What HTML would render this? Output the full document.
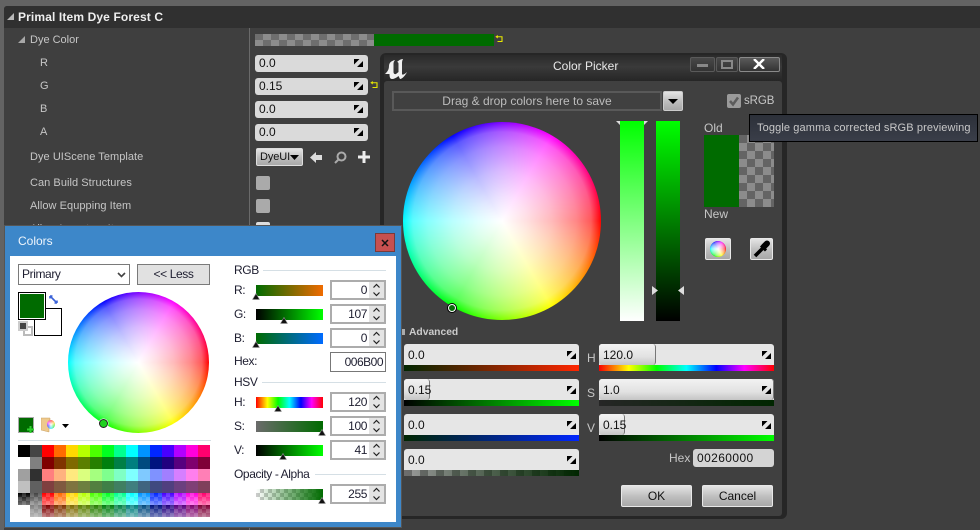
<!DOCTYPE html>
<html><head><meta charset="utf-8"><style>
html,body{margin:0;padding:0}
body{width:980px;height:530px;overflow:hidden;position:relative;background:#636363;font-family:"Liberation Sans",sans-serif;font-size:12px}
div,svg,span.a{position:absolute;box-sizing:border-box}
.t{position:absolute;white-space:nowrap;line-height:14px;height:14px}
.l{color:#c6c6c6}
.s{left:255px;width:113px;height:17px;background:#dadada;border-radius:3px;color:#111}
.v{position:absolute;left:4px;top:1px;line-height:14px;white-space:nowrap;color:#111}
.sp .v{top:4px}
.cb{left:256px;width:14px;height:14px;background:#aaa;border-radius:2px}
.sp{width:175px;height:21px;background:#e6e6e6;border-radius:3px 3px 0 0;color:#111}
.h{left:0;top:0;height:21px;background:linear-gradient(#f2f2f2,#e2e2e2 60%,#c4c4c4);border-right:1px solid #777;border-radius:3px}
.st{width:175px;height:6px}
.d{color:#1e1e30;letter-spacing:-.4px}
.sl{left:256px;width:67px;height:11px}
.n{left:330px;width:56px;height:20px;background:#fff;border:2px solid #acacac}
.nv{position:absolute;right:17px;top:1px;line-height:15px;font-size:12px;color:#1e1e30;letter-spacing:-.4px}
.ar{position:absolute;right:0;width:15px;height:8px;background:#e4e4e4}
.m{width:8px;height:7px}
.btn{background:linear-gradient(#e4e4e4,#bdbdbd 55%,#a8a8a8);border:1px solid #e8e8e8;border-radius:2px;color:#111;text-align:center;line-height:20px}
.sw{left:18px;width:192px;height:12px}
.wh{background:radial-gradient(closest-side,#fff 0,rgba(255,255,255,.88) 25%,rgba(255,255,255,.73) 50%,rgba(255,255,255,.53) 75%,rgba(255,255,255,.35) 90%,rgba(255,255,255,0) 100%),conic-gradient(from 90deg,#f00,#ff0,#0f0,#0ff,#00f,#f0f,#f00);border-radius:50%}
</style></head><body>
<svg width="0" height="0" style="left:0;top:0"><defs>
<symbol id="rz" viewBox="0 0 9 8"><path d="M0 0H5.500L0 5.500ZM9 2V8H3Z" fill="#000"/></symbol>
<symbol id="tri" viewBox="0 0 8 7"><path d="M4 0.500L7.500 6.500H.5Z" fill="#111" stroke="#999" stroke-width=".6"/></symbol>
<symbol id="up" viewBox="0 0 15 8"><path d="M4.500 5.500L7.500 2.500L10.500 5.500" fill="none" stroke="#222" stroke-width="1.200"/></symbol>
<symbol id="dn" viewBox="0 0 15 8"><path d="M4.500 2.500L7.500 5.500L10.500 2.500" fill="none" stroke="#222" stroke-width="1.200"/></symbol>
<symbol id="rs" viewBox="0 0 8 8"><path d="M2 1.750H7V6.500H2.500" fill="none" stroke="#e8e800" stroke-width="1.100"/><path d="M2.800 0V3.500L.3 1.750Z" fill="#e8e800"/></symbol>
</defs></svg>

<!-- details panel -->
<div style="left:4px;top:6px;width:976px;height:524px;background:#3f3f3f;border-radius:3px 0 0 0"></div>
<div style="left:4px;top:6px;width:976px;height:22px;background:#303030;border-radius:3px 0 0 0"></div>
<svg style="left:7px;top:13px" width="7" height="7"><path d="M7 0V7H0Z" fill="#b8b8b8"/></svg>
<span class="t" style="left:18px;top:10px;color:#eee;font-weight:bold;font-size:12px;letter-spacing:.13px">Primal Item Dye Forest C</span>
<div style="left:249px;top:28px;width:1px;height:502px;background:#6a6a6a"></div>
<svg style="left:18px;top:36px" width="7" height="7"><path d="M7 0V7H0Z" fill="#a8a8a8"/></svg>
<span class="t l" style="left:30px;top:33px;font-size:11px">Dye Color</span>
<span class="t l" style="left:40px;top:56px;font-size:11px">R</span>
<span class="t l" style="left:40px;top:79px;font-size:11px">G</span>
<span class="t l" style="left:40px;top:102px;font-size:11px">B</span>
<span class="t l" style="left:40px;top:125px;font-size:11px">A</span>
<span class="t l" style="left:30px;top:150px;font-size:11px;letter-spacing:.05px">Dye UIScene Template</span>
<span class="t l" style="left:30px;top:176px;font-size:11px;letter-spacing:.05px">Can Build Structures</span>
<span class="t l" style="left:30px;top:199px;font-size:11px;letter-spacing:.05px">Allow Equpping Item</span>
<span class="t l" style="left:30px;top:222px;font-size:11px">Allow Inventory Item</span>

<div style="left:255px;top:34px;width:119px;height:12px;background:repeating-conic-gradient(#8c8c8c 0 25%,#6e6e6e 0 50%) 0 0/16px 12px"></div>
<div style="left:374px;top:34px;width:120px;height:12px;background:#006b00"></div>
<svg style="left:495px;top:35px" width="8" height="8"><use href="#rs"/></svg>

<div class="s" style="top:55px"><span class="v">0.0</span><svg style="left:99px;top:4px" width="9" height="8"><use href="#rz"/></svg></div>
<div class="s" style="top:78px"><span class="v">0.15</span><svg style="left:99px;top:4px" width="9" height="8"><use href="#rz"/></svg></div>
<div class="s" style="top:101px"><span class="v">0.0</span><svg style="left:99px;top:4px" width="9" height="8"><use href="#rz"/></svg></div>
<div class="s" style="top:124px"><span class="v">0.0</span><svg style="left:99px;top:4px" width="9" height="8"><use href="#rz"/></svg></div>
<svg style="left:370px;top:81px" width="8" height="8"><use href="#rs"/></svg>

<div class="btn" style="left:256px;top:148px;width:47px;height:18px;line-height:16px;text-align:left;padding-left:3px;border-color:#ddd;font-size:11px;letter-spacing:-.1px">DyeUI</div>
<svg style="left:290px;top:155px" width="9" height="5"><path d="M0 0H9L4.500 5Z" fill="#000"/></svg>
<svg style="left:310px;top:151px" width="13" height="13"><path d="M0 6.500L6 1V4H12V9H6V12Z" fill="#ddd"/></svg>
<svg style="left:334px;top:151px" width="13" height="13"><circle cx="7.500" cy="5.500" r="4" fill="none" stroke="#aaa" stroke-width="2"/><path d="M4.500 8.500L1 12" stroke="#aaa" stroke-width="2"/></svg>
<svg style="left:358px;top:151px" width="12" height="12"><path d="M4.500 0H7.500V4.500H12V7.500H7.500V12H4.500V7.500H0V4.500H4.500Z" fill="#eee"/></svg>
<div class="cb" style="top:176px"></div>
<div class="cb" style="top:199px"></div>
<div class="cb" style="top:222px;background:#ddd"></div>

<!-- Color picker window -->
<div style="left:380px;top:53px;width:407px;height:466px;background:#262626;border-radius:6px"></div>
<div style="left:384px;top:55px;width:398px;height:26px;background:linear-gradient(#2a2a2a,#3a3a3a 45%,#262626)"></div>
<div style="left:384px;top:81px;width:398px;height:435px;background:#404040;border-radius:3px"></div>
<svg style="left:385px;top:59px" width="23" height="20"><path d="M0 15C2 13 4 11 4 7C4 4 6 2 10 1C8.500 3 8.500 4 8.500 6V13C8.500 15 10 15.500 11 15L13.500 13V5C13.500 3.500 13 3 12 3C14 1 16 0 18 0C17 2 17 3 17 5V15C17 16 19 16 22 13C20 17 17 20 15 20L13.500 17C11 19 9 20 7 20C5 20 4.500 18 4.500 15C3 15 1.500 15 0 15Z" fill="#f0f0f0"/></svg>
<span class="t" style="left:553px;top:59px;color:#e8e8e8;font-size:12px">Color Picker</span>
<div style="left:690px;top:57px;width:25px;height:15px;background:linear-gradient(#484848,#333);border:1px solid #5a5a5a;border-radius:2px"><div style="left:6px;top:6px;width:11px;height:3px;background:#888"></div></div>
<div style="left:716px;top:57px;width:22px;height:15px;background:linear-gradient(#484848,#333);border:1px solid #5a5a5a;border-radius:2px"><div style="left:4px;top:2px;width:12px;height:9px;border:2px solid #888"></div></div>
<div style="left:739px;top:57px;width:41px;height:15px;background:linear-gradient(#5a5a5a,#333);border:1px solid #8a8a8a;border-radius:2px"></div>
<svg style="left:753px;top:59px" width="12" height="10"><path d="M1 0L11 10M11 0L1 10" stroke="#fff" stroke-width="2.400"/></svg>

<div style="left:392px;top:91px;width:270px;height:20px;border:2px solid #595959"></div>
<span class="t" style="left:392px;top:94px;width:270px;text-align:center;color:#bcbcbc">Drag &amp; drop colors here to save</span>
<div class="btn" style="left:663px;top:91px;width:20px;height:20px;border-color:#ccc"></div>
<svg style="left:668px;top:99px" width="10" height="5"><path d="M0 0H10L5 5Z" fill="#000"/></svg>
<div class="cb" style="left:727px;top:94px;background:#9a9a9a"></div>
<svg style="left:728px;top:95px" width="12" height="12"><path d="M2 6L5 9.500L10 2.500" fill="none" stroke="#5c5c5c" stroke-width="2.500"/></svg>
<span class="t" style="left:744px;top:94px;color:#c6c6c6;font-size:11.500px;letter-spacing:-.1px">sRGB</span>

<!-- big wheel -->
<div class="wh" style="left:403px;top:122px;width:198px;height:198px"></div>
<div style="left:448px;top:304px;width:8px;height:8px;border-radius:50%;background:#0a6b0a;border:1px solid #fff;box-shadow:0 0 0 1px #000"></div>

<div style="left:620px;top:121px;width:24px;height:200px;background:linear-gradient(#0f0,#fff)"></div>
<div style="left:656px;top:121px;width:24px;height:200px;background:linear-gradient(#0f0,#000)"></div>
<svg style="left:616px;top:120px" width="32" height="5"><path d="M0 1H4V5ZM32 1H28V5Z" fill="#ddd"/></svg>
<svg style="left:652px;top:286px" width="32" height="9"><path d="M0 0L6 4.500L0 9ZM32 0L26 4.500L32 9Z" fill="#ddd"/></svg>

<span class="t" style="left:704px;top:121px;color:#c6c6c6">Old</span>
<div style="left:704px;top:135px;width:35px;height:72px;background:#006b00"></div>
<div style="left:739px;top:135px;width:35px;height:72px;background:repeating-conic-gradient(#8c8c8c 0 25%,#646464 0 50%) 0 0/16px 16px"></div>
<span class="t" style="left:704px;top:207px;color:#c6c6c6">New</span>
<div class="btn" style="left:705px;top:238px;width:26px;height:22px"></div>
<div class="wh" style="left:710px;top:241px;width:16px;height:16px"></div>
<div class="btn" style="left:750px;top:238px;width:23px;height:22px"></div>
<svg style="left:752px;top:239px" width="20" height="20"><path d="M3 17L10.500 9.500" stroke="#000" stroke-width="3.600" fill="none"/><path d="M9 6.500L14 11.500" stroke="#000" stroke-width="3" fill="none"/><path d="M12 7.500L15 4.500" stroke="#000" stroke-width="6" stroke-linecap="round" fill="none"/></svg>

<!-- tooltip -->
<div style="left:749px;top:114px;width:229px;height:28px;background:linear-gradient(#2c3039,#3a3e49);border:1px solid #000"></div>
<span class="t" style="left:757px;top:121px;color:#c8c8c8;font-size:11px;letter-spacing:.12px">Toggle gamma corrected sRGB previewing</span>

<!-- advanced -->
<svg style="left:402px;top:329px" width="3" height="6"><rect width="3" height="6" fill="#aaa"/></svg>
<span class="t" style="left:409px;top:326px;color:#ccc;font-weight:bold;font-size:10.300px">Advanced</span>

<div class="sp" style="left:404px;top:344px"><span class="v">0.0</span><svg style="left:163px;top:7px" width="9" height="8"><use href="#rz"/></svg></div>
<div class="st" style="left:404px;top:365px;background:linear-gradient(90deg,#002600,#ff2600)"></div>
<div class="sp" style="left:404px;top:379px"><div class="h" style="width:26px"></div><span class="v">0.15</span><svg style="left:163px;top:7px" width="9" height="8"><use href="#rz"/></svg></div>
<div class="st" style="left:404px;top:400px;background:linear-gradient(90deg,#000,#0f0)"></div>
<div class="sp" style="left:404px;top:414px"><span class="v">0.0</span><svg style="left:163px;top:7px" width="9" height="8"><use href="#rz"/></svg></div>
<div class="st" style="left:404px;top:435px;background:linear-gradient(90deg,#002600,#0026ff)"></div>
<div class="sp" style="left:404px;top:449px"><span class="v">0.0</span><svg style="left:163px;top:7px" width="9" height="8"><use href="#rz"/></svg></div>
<div class="st" style="left:404px;top:470px;background:linear-gradient(90deg,rgba(0,38,0,0),#002600),repeating-conic-gradient(#9a9a9a 0 25%,#6e6e6e 0 50%) 0 0/16px 12px"></div>

<span class="t l" style="left:587px;top:351px">H</span>
<span class="t l" style="left:587px;top:386px">S</span>
<span class="t l" style="left:587px;top:421px">V</span>

<div class="sp" style="left:599px;top:344px"><div class="h" style="width:57px"></div><span class="v">120.0</span><svg style="left:163px;top:7px" width="9" height="8"><use href="#rz"/></svg></div>
<div class="st" style="left:599px;top:365px;background:linear-gradient(90deg,#f80000,#ff0 17%,#0f0 33%,#0ff 50%,#00f 67%,#f0f 83%,#f00)"></div>
<div class="sp" style="left:599px;top:379px"><div class="h" style="width:175px"></div><span class="v">1.0</span><svg style="left:163px;top:7px" width="9" height="8"><use href="#rz"/></svg></div>
<div class="st" style="left:599px;top:400px;background:linear-gradient(90deg,#262626,#002600)"></div>
<div class="sp" style="left:599px;top:414px"><div class="h" style="width:26px"></div><span class="v">0.15</span><svg style="left:163px;top:7px" width="9" height="8"><use href="#rz"/></svg></div>
<div class="st" style="left:599px;top:435px;background:linear-gradient(90deg,#000,#0f0)"></div>

<span class="t l" style="left:669px;top:451px">Hex</span>
<div style="left:693px;top:449px;width:81px;height:18px;background:#d4d4d4;border-radius:3px"></div>
<span class="t" style="left:697px;top:451px;color:#111;letter-spacing:.4px">00260000</span>
<div class="btn" style="left:621px;top:485px;width:71px;height:22px">OK</div>
<div class="btn" style="left:702px;top:485px;width:71px;height:22px">Cancel</div>

<!-- Colors window -->
<div style="left:4px;top:225px;width:398px;height:303px;background:#3d87c9;border:1px solid #555"></div>
<div style="left:10px;top:256px;width:386px;height:266px;background:#fff"></div>
<span class="t" style="left:18px;top:234px;color:#eef5fc;font-size:12px">Colors</span>
<div style="left:375px;top:233px;width:20px;height:19px;background:#c75050;border:1px solid #7a3a3a"></div>
<svg style="left:381px;top:239px" width="8" height="8"><path d="M1 1L7 7M7 1L1 7" stroke="#111" stroke-width="1.500"/></svg>

<div style="left:18px;top:264px;width:112px;height:21px;border:1px solid #7a7a7a;background:#fff"></div>
<span class="t d" style="left:22px;top:267px">Primary</span>
<svg style="left:117px;top:272px" width="9" height="6"><path d="M1 1L4.500 4.500L8 1" fill="none" stroke="#444" stroke-width="1.600"/></svg>
<div style="left:137px;top:264px;width:73px;height:21px;background:#e1e1e1;border:1px solid #7a7a7a"></div>
<span class="t d" style="left:137px;top:267px;width:73px;text-align:center">&lt;&lt; Less</span>

<div style="left:34px;top:308px;width:28px;height:28px;background:#fff;border:1px solid #000"></div>
<div style="left:18px;top:292px;width:28px;height:28px;background:#006b00;border:1px solid #000;box-shadow:inset 0 0 0 1px #fff"></div>
<svg style="left:49px;top:295px" width="9" height="9"><path d="M1 1L8 8M1 1V3.500M1 1H3.500M8 8V5.500M8 8H5.500" fill="none" stroke="#3b63d8" stroke-width="1.600"/></svg>
<div style="left:23px;top:326px;width:10px;height:10px;background:#fff;border:2px solid #bbb"></div>
<div style="left:18px;top:321px;width:10px;height:10px;background:#444;border:2px solid #ccc"></div>

<div class="wh" style="left:68px;top:292px;width:141px;height:141px"></div>
<div style="left:99px;top:419px;width:9px;height:9px;border-radius:50%;background:#1fd11f;border:1.500px solid #222;box-shadow:0 0 0 .5px #fff"></div>

<div style="left:18px;top:417px;width:16px;height:16px;background:#006b00;border:1px solid #aaa"></div>
<svg style="left:27px;top:426px" width="7" height="7"><path d="M2.500 0H4.500V2.500H7V4.500H4.500V7H2.500V4.500H0V2.500H2.500Z" fill="#2fd02f"/></svg>
<svg style="left:41px;top:417px" width="15" height="16"><path d="M0 1H9V3H8V15L0 13Z" fill="#eec98c" stroke="#c9a060" stroke-width=".5"/></svg>
<div style="left:47px;top:420px;width:8px;height:9px;border-radius:50%;background:radial-gradient(closest-side,#fff,rgba(255,255,255,0)),conic-gradient(#f55,#fd5,#5e5,#5ef,#55f,#f5f,#f55)"></div>
<svg style="left:62px;top:424px" width="7" height="4"><path d="M0 0H7L3.500 4Z" fill="#000"/></svg>
<div style="left:18px;top:440px;width:193px;height:1px;background:#d5dfe5"></div>

<div class="sw" style="top:445px;background:linear-gradient(90deg,#000 0 12px,#444 12px 24px,#f00 24px 36px,#ff6a00 36px 48px,#ffd800 48px 60px,#b6ff00 60px 72px,#4cff00 72px 84px,#00ff21 84px 96px,#00ff90 96px 108px,#0ff 108px 120px,#0094ff 120px 132px,#0026ff 132px 144px,#4800ff 144px 156px,#b200ff 156px 168px,#ff00dc 168px 180px,#ff006e 180px)"></div>
<div class="sw" style="top:457px;background:linear-gradient(90deg,#fff 0 12px,#808080 12px 24px,#7f0000 24px 36px,#7f3300 36px 48px,#7f6a00 48px 60px,#5b7f00 60px 72px,#267f00 72px 84px,#007f0e 84px 96px,#007f46 96px 108px,#007f7f 108px 120px,#004a7f 120px 132px,#00137f 132px 144px,#21007f 144px 156px,#57007f 156px 168px,#7f006e 168px 180px,#7f0037 180px)"></div>
<div class="sw" style="top:469px;background:linear-gradient(90deg,#a0a0a0 0 12px,#303030 12px 24px,#ff7f7f 24px 36px,#ffb27f 36px 48px,#ffe97f 48px 60px,#daff7f 60px 72px,#a5ff7f 72px 84px,#7fff8e 84px 96px,#7fffc5 96px 108px,#7fffff 108px 120px,#7fc9ff 120px 132px,#7f92ff 132px 144px,#a17fff 144px 156px,#d67fff 156px 168px,#ff7fed 168px 180px,#ff7fb6 180px)"></div>
<div class="sw" style="top:481px;background:linear-gradient(90deg,#c0c0c0 0 12px,#606060 12px 24px,#7f3f3f 24px 36px,#7f593f 36px 48px,#7f743f 48px 60px,#6d7f3f 60px 72px,#527f3f 72px 84px,#3f7f47 84px 96px,#3f7f62 96px 108px,#3f7f7f 108px 120px,#3f647f 120px 132px,#3f497f 132px 144px,#503f7f 144px 156px,#6b3f7f 156px 168px,#7f3f76 168px 180px,#7f3f5b 180px)"></div>
<div class="sw" style="top:493px;background:linear-gradient(90deg,#000 0 12px,#444 12px 24px,#f00 24px 36px,#ff6a00 36px 48px,#ffd800 48px 60px,#b6ff00 60px 72px,#4cff00 72px 84px,#00ff21 84px 96px,#00ff90 96px 108px,#0ff 108px 120px,#0094ff 120px 132px,#0026ff 132px 144px,#4800ff 144px 156px,#b200ff 156px 168px,#ff00dc 168px 180px,#ff006e 180px)"></div>
<div class="sw" style="top:505px;background:linear-gradient(90deg,#fff 0 12px,#808080 12px 24px,#7f0000 24px 36px,#7f3300 36px 48px,#7f6a00 48px 60px,#5b7f00 60px 72px,#267f00 72px 84px,#007f0e 84px 96px,#007f46 96px 108px,#007f7f 108px 120px,#004a7f 120px 132px,#00137f 132px 144px,#21007f 144px 156px,#57007f 156px 168px,#7f006e 168px 180px,#7f0037 180px)"></div>
<div class="sw" style="top:493px;height:24px;background:linear-gradient(rgba(255,255,255,0),rgba(255,255,255,.45) 50%,rgba(255,255,255,0) 50%,rgba(255,255,255,.45)),repeating-conic-gradient(rgba(255,255,255,.16) 0 25%,rgba(255,255,255,0) 0 50%) 0 0/8px 8px"></div>

<span class="t d" style="left:234px;top:263px">RGB</span>
<div style="left:263px;top:270px;width:123px;height:1px;background:#d5dfe5"></div>
<span class="t d" style="left:234px;top:283px">R:</span>
<span class="t d" style="left:234px;top:307px">G:</span>
<span class="t d" style="left:234px;top:331px">B:</span>
<span class="t d" style="left:234px;top:354px">Hex:</span>
<span class="t d" style="left:234px;top:375px">HSV</span>
<div style="left:262px;top:382px;width:124px;height:1px;background:#d5dfe5"></div>
<span class="t d" style="left:234px;top:395px">H:</span>
<span class="t d" style="left:234px;top:419px">S:</span>
<span class="t d" style="left:234px;top:443px">V:</span>
<span class="t d" style="left:234px;top:467px">Opacity - Alpha</span>
<div style="left:315px;top:474px;width:71px;height:1px;background:#d5dfe5"></div>

<div class="sl" style="top:285px;background:linear-gradient(90deg,#006b00,#f06b00)"></div>
<div class="sl" style="top:309px;background:linear-gradient(90deg,#000,#0f0)"></div>
<div class="sl" style="top:333px;background:linear-gradient(90deg,#006b00,#006bff)"></div>
<div class="sl" style="top:397px;background:linear-gradient(90deg,#f00,#ff0 17%,#0f0 33%,#0ff 50%,#00f 67%,#f0f 83%,#f00)"></div>
<div class="sl" style="top:421px;background:linear-gradient(90deg,#6b6b6b,#006b00)"></div>
<div class="sl" style="top:445px;background:linear-gradient(90deg,#000,#0f0)"></div>
<div class="sl" style="top:489px;background:linear-gradient(90deg,rgba(0,107,0,0),#006b00),repeating-conic-gradient(#ccc 0 25%,#fff 0 50%) 0 0/8px 8px"></div>

<svg class="m" style="left:252px;top:293px"><use href="#tri"/></svg>
<svg class="m" style="left:280px;top:317px"><use href="#tri"/></svg>
<svg class="m" style="left:252px;top:341px"><use href="#tri"/></svg>
<svg class="m" style="left:274px;top:405px"><use href="#tri"/></svg>
<svg class="m" style="left:318px;top:429px"><use href="#tri"/></svg>
<svg class="m" style="left:279px;top:453px"><use href="#tri"/></svg>
<svg class="m" style="left:318px;top:497px"><use href="#tri"/></svg>

<div class="n" style="top:280px"><span class="nv">0</span><div class="ar" style="top:0"><svg width="15" height="8"><use href="#up"/></svg></div><div class="ar" style="top:8px"><svg width="15" height="8"><use href="#dn"/></svg></div></div>
<div class="n" style="top:304px"><span class="nv">107</span><div class="ar" style="top:0"><svg width="15" height="8"><use href="#up"/></svg></div><div class="ar" style="top:8px"><svg width="15" height="8"><use href="#dn"/></svg></div></div>
<div class="n" style="top:328px"><span class="nv">0</span><div class="ar" style="top:0"><svg width="15" height="8"><use href="#up"/></svg></div><div class="ar" style="top:8px"><svg width="15" height="8"><use href="#dn"/></svg></div></div>
<div class="n" style="top:352px;border:1px solid #777"></div>
<span class="t d" style="left:330px;top:355px;width:53px;text-align:right;letter-spacing:-.5px">006B00</span>
<div class="n" style="top:392px"><span class="nv">120</span><div class="ar" style="top:0"><svg width="15" height="8"><use href="#up"/></svg></div><div class="ar" style="top:8px"><svg width="15" height="8"><use href="#dn"/></svg></div></div>
<div class="n" style="top:416px"><span class="nv">100</span><div class="ar" style="top:0"><svg width="15" height="8"><use href="#up"/></svg></div><div class="ar" style="top:8px"><svg width="15" height="8"><use href="#dn"/></svg></div></div>
<div class="n" style="top:440px"><span class="nv">41</span><div class="ar" style="top:0"><svg width="15" height="8"><use href="#up"/></svg></div><div class="ar" style="top:8px"><svg width="15" height="8"><use href="#dn"/></svg></div></div>
<div class="n" style="top:484px"><span class="nv">255</span><div class="ar" style="top:0"><svg width="15" height="8"><use href="#up"/></svg></div><div class="ar" style="top:8px"><svg width="15" height="8"><use href="#dn"/></svg></div></div>
</body></html>
